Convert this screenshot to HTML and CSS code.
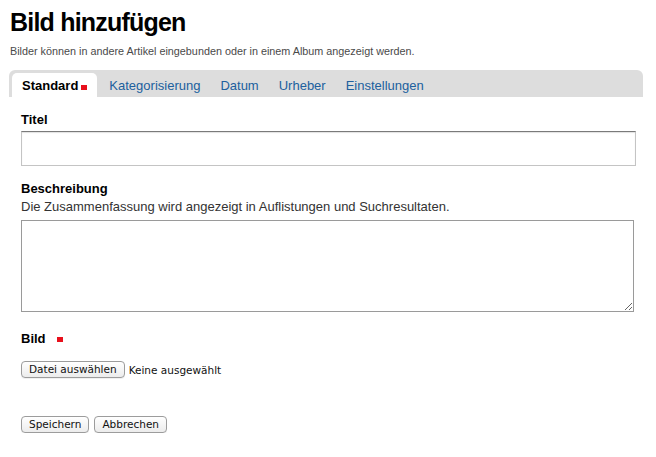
FILE: index.html
```html
<!DOCTYPE html>
<html lang="de">
<head>
<meta charset="utf-8">
<title>Bild hinzufügen</title>
<link rel="stylesheet" href="styles.css">
</head>
<body>
<div class="page">
  <h1 class="title">Bild hinzufügen</h1>
  <p class="lead">Bilder können in andere Artikel eingebunden oder in einem Album angezeigt werden.</p>

  <ul class="tabs">
    <li class="tab active">Standard<span class="req"></span></li>
    <li class="tab">Kategorisierung</li>
    <li class="tab">Datum</li>
    <li class="tab">Urheber</li>
    <li class="tab">Einstellungen</li>
  </ul>

  <form class="form">
    <div class="field field-title">
      <label class="label">Titel</label>
      <input class="text-input" type="text">
    </div>
    <div class="field field-desc">
      <label class="label label-tall">Beschreibung</label>
      <div class="help">Die Zusammenfassung wird angezeigt in Auflistungen und Suchresultaten.</div>
      <textarea class="textarea"></textarea>
    </div>
    <div class="field field-image">
      <label class="label">Bild<span class="req req-gap"></span></label>
      <div class="file-row">
        <button type="button" class="btn">Datei auswählen</button>
        <span class="file-name">Keine ausgewählt</span>
      </div>
    </div>
    <div class="actions">
      <button type="button" class="btn">Speichern</button>
      <button type="button" class="btn">Abbrechen</button>
    </div>
  </form>
</div>
</body>
</html>
```

FILE: styles.css
```css
html, body {
  margin: 0;
  padding: 0;
  background: #ffffff;
}

body {
  font-family: "Liberation Sans", Arial, Helvetica, sans-serif;
  color: #000;
}

.page {
  width: 634px;
  padding: 7px 0 0 9px;
}

.title {
  margin: 0 0 0 1px;
  font-size: 25px;
  line-height: 30px;
  font-weight: bold;
  letter-spacing: -0.8px;
  color: #000;
}

.lead {
  margin: 7px 0 0 1px;
  font-size: 10.8px;
  line-height: 14px;
  color: #4a4a4a;
}

.tabs {
  list-style: none;
  margin: 12px 0 0 0;
  padding: 3px 0 0 3px;
  display: flex;
  background: #dddddd;
  border-radius: 6px 6px 0 0;
  height: 24px;
}

.tab {
  padding: 5px 10px 4px 10px;
  font-size: 13px;
  line-height: 15px;
  color: #20609e;
  display: flex;
  align-items: center;
}

.tab.active {
  background: #ffffff;
  color: #000;
  font-weight: bold;
  border-radius: 5px 5px 0 0;
  margin-right: 2px;
}

.req {
  display: inline-block;
  width: 6px;
  height: 5px;
  background: #e8101c;
  margin-left: 3px;
  margin-top: 3px;
}

.req-gap {
  margin-left: 11px;
  margin-top: 2px;
}

.form {
  padding: 15px 0 0 12px;
}

.label {
  display: flex;
  align-items: center;
  font-size: 13px;
  line-height: 15px;
  font-weight: bold;
}

.label-tall {
  line-height: 18px;
}

.text-input {
  display: block;
  box-sizing: border-box;
  width: 615px;
  height: 35px;
  margin: 4px 0 0 0;
  border: 1px solid #c4c4c4;
  border-top-color: #7a7a7a;
  box-shadow: inset 0 1px 1px rgba(0,0,0,0.12);
  background: #fff;
  padding: 0 4px;
}

.field-desc {
  margin-top: 14px;
}

.help {
  font-size: 13px;
  line-height: 18px;
  color: #333;
}

.textarea {
  display: block;
  box-sizing: border-box;
  width: 613px;
  height: 92px;
  margin: 4px 0 0 0;
  border: 1px solid #9a9a9a;
  background: #fff;
  resize: both;
}

.field-image {
  margin-top: 19px;
}

.file-row {
  display: flex;
  align-items: center;
  margin-top: 15px;
  gap: 4px;
}

.file-name {
  font-family: "DejaVu Sans", sans-serif;
  font-size: 10.5px;
  color: #111;
}

.btn {
  box-sizing: border-box;
  height: 17px;
  padding: 0 7px;
  font-family: "DejaVu Sans", sans-serif;
  font-size: 10.5px;
  line-height: 15px;
  color: #111;
  border: 1px solid #9c9c9c;
  border-radius: 4px;
  background: linear-gradient(#ffffff, #ececec);
  box-shadow: 0 1px 0 rgba(0,0,0,0.06);
}

.actions {
  display: flex;
  gap: 5px;
  margin-top: 38px;
}
```
